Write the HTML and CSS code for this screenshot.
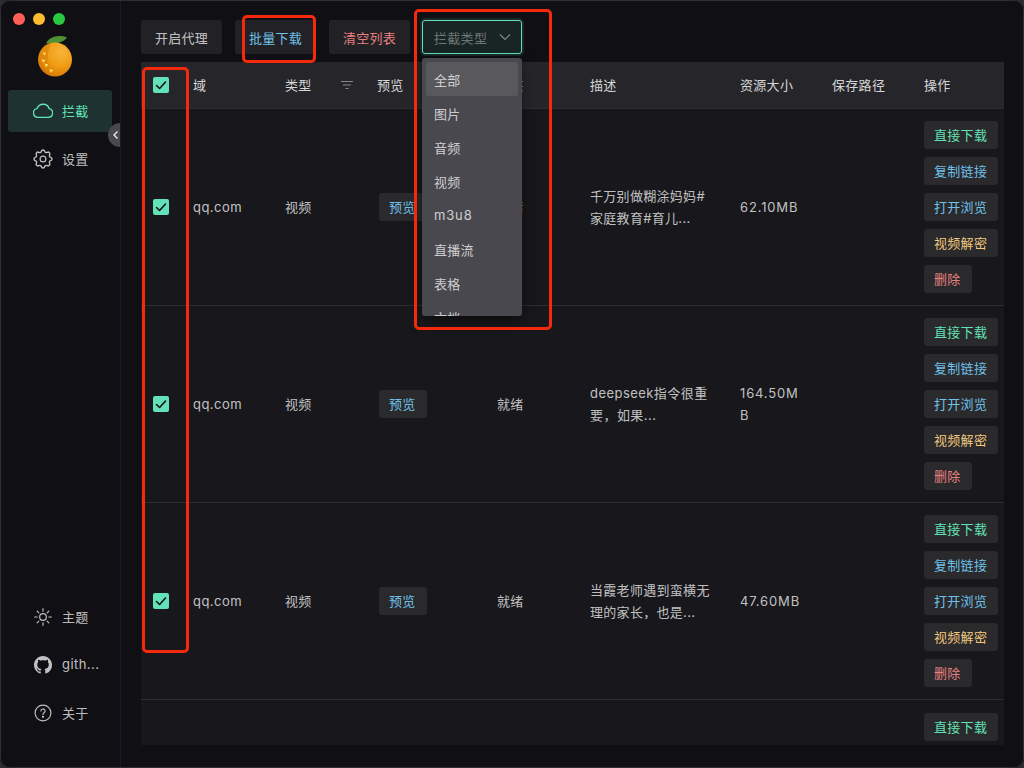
FILE: index.html
```html
<!DOCTYPE html>
<html lang="zh">
<head>
<meta charset="utf-8">
<title>拦截</title>
<link rel="stylesheet" href="styles.css">
</head>
<body>
<div class="window">
  <aside class="sidebar">
    <div class="traffic"><i class="dot red"></i><i class="dot yellow"></i><i class="dot green"></i></div>
    <svg class="logo" viewBox="0 0 36 42" width="36" height="42">
      <defs>
        <radialGradient id="og" cx="0.68" cy="0.28" r="0.85">
          <stop offset="0" stop-color="#f8b53a"/><stop offset="0.5" stop-color="#f09c14"/><stop offset="0.85" stop-color="#d97c08"/><stop offset="1" stop-color="#b85f06"/>
        </radialGradient>
      </defs>
      <path d="M9 8.500 C12 2 21 -1 30 2.500 C26 8 18 9 9 8.500Z" fill="#4f9236"/>
      <circle cx="18" cy="24.500" r="17" fill="url(#og)"/>
      <path d="M7 11.500 C1.500 21 6 35 18 41 C10 32 9 20 13.500 9Z" fill="#dc860c" opacity=".75"/>
      <path d="M5.500 17.500l3.500 .3-1.500 2.700zM4.500 24.500l3.800 .5-2 2.800zM7.500 28.500l3.800 1-2.300 2.700zM12.500 34l4 1.500-3 2z" fill="#fbe45c"/>
    </svg>
    <nav class="nav">
      <a class="nav-item active">
        <svg class="ico" viewBox="0 0 24 24"><path d="M6.500 18.500h11a4.500 4.500 0 0 0 .8-8.900A6.500 6.500 0 0 0 6 9.200a4.700 4.700 0 0 0 .5 9.300Z" transform="translate(-2 -2) scale(1.17)"/></svg>
        <span>拦截</span>
      </a>
      <a class="nav-item">
        <svg class="ico" viewBox="0 0 24 24"><path d="M10.325 4.317c.426-1.756 2.924-1.756 3.35 0a1.724 1.724 0 0 0 2.573 1.066c1.543-.94 3.31.826 2.37 2.37a1.724 1.724 0 0 0 1.065 2.572c1.756.426 1.756 2.924 0 3.35a1.724 1.724 0 0 0-1.066 2.573c.94 1.543-.826 3.31-2.37 2.37a1.724 1.724 0 0 0-2.572 1.065c-.426 1.756-2.924 1.756-3.35 0a1.724 1.724 0 0 0-2.573-1.066c-1.543.94-3.31-.826-2.37-2.37a1.724 1.724 0 0 0-1.065-2.572c-1.756-.426-1.756-2.924 0-3.35a1.724 1.724 0 0 0 1.066-2.573c-.94-1.543.826-3.31 2.37-2.37c1 .608 2.296.07 2.572-1.065z" transform="translate(-2.400 -2.400) scale(1.2)"/><circle cx="12" cy="12" r="3.500"/></svg>
        <span>设置</span>
      </a>
    </nav>
    <nav class="nav nav-bottom">
      <a class="nav-item">
        <svg class="ico" viewBox="0 0 24 24"><circle cx="12" cy="12" r="4"/><path d="M12 2v3M12 19v3M2 12h3M19 12h3M5 5l2 2M17 17l2 2M5 19l2-2M17 7l2-2"/></svg>
        <span>主题</span>
      </a>
      <a class="nav-item">
        <svg class="ico solid" viewBox="0 0 16 16"><path d="M8 0C3.580 0 0 3.580 0 8c0 3.540 2.290 6.530 5.470 7.590.4.070.55-.17.55-.38 0-.19-.01-.82-.01-1.490-2.010.37-2.530-.49-2.690-.94-.09-.23-.48-.94-.82-1.130-.28-.15-.68-.52-.01-.53.63-.01 1.080.58 1.230.82.72 1.210 1.870.87 2.330.66.07-.52.28-.87.51-1.070-1.780-.2-3.640-.89-3.640-3.950 0-.87.31-1.590.82-2.150-.08-.2-.36-1.020.08-2.120 0 0 .67-.21 2.200.82.64-.18 1.320-.27 2-.27s1.360.09 2 .27c1.530-1.040 2.200-.82 2.200-.82.44 1.100.16 1.920.08 2.120.51.56.82 1.270.82 2.150 0 3.070-1.870 3.750-3.650 3.950.29.25.54.73.54 1.480 0 1.070-.01 1.930-.01 2.200 0 .21.15.46.55.38A8.010 8.010 0 0 0 16 8c0-4.420-3.580-8-8-8Z"/></svg>
        <span class="lat">gith...</span>
      </a>
      <a class="nav-item">
        <svg class="ico" viewBox="0 0 24 24"><circle cx="12" cy="12" r="9.500"/><path d="M9.500 9.600a2.500 2.500 0 1 1 3.700 2.200c-.8.5-1.200 1-1.200 2"/><circle class="fill" cx="12" cy="16.600" r=".6"/></svg>
        <span>关于</span>
      </a>
    </nav>
    <span class="collapse"><svg viewBox="0 0 8 10" width="8" height="10"><path d="M5.500 1.500 2 5l3.500 3.500"/></svg></span>
  </aside>

  <main class="main">
    <div class="toolbar">
      <button class="btn">开启代理</button>
      <button class="btn info">批量下载</button>
      <button class="btn error">清空列表</button>
      <div class="select">
        <span>拦截类型</span>
        <svg viewBox="0 0 12 8" width="12" height="8"><path d="M1 1.500 6 6.500 11 1.500"/></svg>
      </div>
    </div>

    <div class="table">
      <div class="row head">
        <div class="cell check"><i class="box"><svg viewBox="0 0 16 16"><path d="M3.500 8.500 6.600 11.500 12.500 5"/></svg></i></div>
        <div class="cell">域</div>
        <div class="cell type-head">类型<svg class="filter" viewBox="0 0 14 10" width="14" height="10"><path d="M1 1.500h12M3 5h8M5.500 8.500h3"/></svg></div>
        <div class="cell">预览</div>
        <div class="cell">状态</div>
        <div class="cell">描述</div>
        <div class="cell">资源大小</div>
        <div class="cell">保存路径</div>
        <div class="cell">操作</div>
      </div>

      <div class="row">
        <div class="cell check"><i class="box"><svg viewBox="0 0 16 16"><path d="M3.500 8.500 6.600 11.500 12.500 5"/></svg></i></div>
        <div class="cell lat">qq.com</div>
        <div class="cell">视频</div>
        <div class="cell preview"><button class="tag info">预览</button></div>
        <div class="cell">就绪</div>
        <div class="cell desc">千万别做糊涂妈妈#家庭教育#育儿...</div>
        <div class="cell size num">62.10MB</div>
        <div class="cell"></div>
        <div class="cell actions">
          <button class="tag success">直接下载</button>
          <button class="tag info">复制链接</button>
          <button class="tag info">打开浏览</button>
          <button class="tag warning">视频解密</button>
          <button class="tag error">删除</button>
        </div>
      </div>

      <div class="row">
        <div class="cell check"><i class="box"><svg viewBox="0 0 16 16"><path d="M3.500 8.500 6.600 11.500 12.500 5"/></svg></i></div>
        <div class="cell lat">qq.com</div>
        <div class="cell">视频</div>
        <div class="cell preview"><button class="tag info">预览</button></div>
        <div class="cell">就绪</div>
        <div class="cell desc lat">deepseek指令很重要，如果...</div>
        <div class="cell size num">164.50MB</div>
        <div class="cell"></div>
        <div class="cell actions">
          <button class="tag success">直接下载</button>
          <button class="tag info">复制链接</button>
          <button class="tag info">打开浏览</button>
          <button class="tag warning">视频解密</button>
          <button class="tag error">删除</button>
        </div>
      </div>

      <div class="row">
        <div class="cell check"><i class="box"><svg viewBox="0 0 16 16"><path d="M3.500 8.500 6.600 11.500 12.500 5"/></svg></i></div>
        <div class="cell lat">qq.com</div>
        <div class="cell">视频</div>
        <div class="cell preview"><button class="tag info">预览</button></div>
        <div class="cell">就绪</div>
        <div class="cell desc">当霞老师遇到蛮横无理的家长，也是...</div>
        <div class="cell size num">47.60MB</div>
        <div class="cell"></div>
        <div class="cell actions">
          <button class="tag success">直接下载</button>
          <button class="tag info">复制链接</button>
          <button class="tag info">打开浏览</button>
          <button class="tag warning">视频解密</button>
          <button class="tag error">删除</button>
        </div>
      </div>

      <div class="row">
        <div class="cell check"></div>
        <div class="cell"></div>
        <div class="cell"></div>
        <div class="cell"></div>
        <div class="cell"></div>
        <div class="cell"></div>
        <div class="cell"></div>
        <div class="cell"></div>
        <div class="cell actions">
          <button class="tag success">直接下载</button>
        </div>
      </div>
    </div>

    <div class="dropdown">
      <div class="option selected">全部</div>
      <div class="option">图片</div>
      <div class="option">音频</div>
      <div class="option">视频</div>
      <div class="option num">m3u8</div>
      <div class="option">直播流</div>
      <div class="option">表格</div>
      <div class="option">文档</div>
    </div>
  </main>

  <i class="mark mark-check"></i>
  <i class="mark mark-batch"></i>
  <i class="mark mark-select"></i>
</div>
</body>
</html>
```
FILE: styles.css
```css
* { box-sizing: border-box; }
html, body { margin: 0; height: 100%; background: #2e2e30; }
body {
  font-family: Inter, "Noto Sans CJK SC", sans-serif;
  font-size: 13px;
  letter-spacing: 0.3px;
  color: rgba(255, 255, 255, 0.74);
  overflow: hidden;
}
button { font: inherit; letter-spacing: inherit; border: 0; cursor: pointer; }
.lat { letter-spacing: 0.45px; }
.num { letter-spacing: 0.85px; }

.window {
  position: relative;
  display: flex;
  width: 1024px;
  height: 768px;
  overflow: hidden;
  background: #101014;
  border-radius: 10px;
}
.window::after {
  content: "";
  position: absolute;
  inset: 0;
  border: 1px solid #303034;
  border-radius: 10px;
  pointer-events: none;
}

/* sidebar */
.sidebar {
  position: relative;
  flex: 0 0 121px;
  padding: 13px 8px 0;
  display: flex;
  flex-direction: column;
  border-right: 1px solid #15192a;
}
.traffic { display: flex; gap: 8px; padding-left: 5px; }
.dot { width: 12px; height: 12px; border-radius: 50%; }
.red { background: #ff5f57; }
.yellow { background: #febc2e; }
.green { background: #28c840; }
.logo { margin: 10px 0 0 29px; flex: none; }
.nav { display: flex; flex-direction: column; gap: 6px; margin-top: 13px; }
.nav-bottom { margin-top: auto; margin-bottom: 34px; }
.nav-item {
  display: flex;
  align-items: center;
  gap: 9px;
  width: 104px;
  height: 42px;
  padding-left: 25px;
  border-radius: 3px;
}
.nav-item span { margin-top: -2px; }
.nav-item.active { background: #1d3231; color: #63e2b7; }
.ico { width: 20px; height: 20px; flex: none; fill: none; stroke: currentColor; stroke-width: 1.4; stroke-linecap: round; stroke-linejoin: round; }
.ico.solid { width: 18px; height: 18px; margin: 0 1px; fill: currentColor; stroke: none; }
.ico .fill { fill: currentColor; }
.collapse {
  position: absolute;
  right: 0;
  top: 123px;
  width: 12px;
  height: 24px;
  display: flex;
  align-items: center;
  justify-content: flex-end;
  overflow: hidden;
  border-radius: 12px 0 0 12px;
  background: #48484e;
}
.collapse svg { flex: none; fill: none; stroke: #e8e8e8; stroke-width: 1.4; }

/* main */
.main { position: relative; flex: 1; padding: 20px 20px 0; }
.toolbar { display: flex; align-items: center; gap: 13px; height: 34px; margin-bottom: 8px; }
.btn {
  width: 81px;
  height: 34px;
  padding: 0;
  border-radius: 3px;
  background: rgba(255, 255, 255, 0.08);
  color: rgba(255, 255, 255, 0.74);
}
.btn.info, .tag.info { color: #70c0e8; }
.btn.error, .tag.error { color: #e88080; }
.tag.success { color: #63e2b7; }
.tag.warning { color: #f2c97d; }
.select {
  display: flex;
  align-items: center;
  justify-content: space-between;
  width: 100px;
  height: 34px;
  margin-left: -1px;
  padding: 0 10px 0 11px;
  border: 1px solid #63e2b7;
  border-radius: 3px;
  background: rgba(99, 226, 183, 0.1);
  box-shadow: 0 0 0 2px rgba(99, 226, 183, 0.12);
  color: rgba(255, 255, 255, 0.38);
}
.select svg { fill: none; stroke: rgba(255, 255, 255, 0.45); stroke-width: 1.1; }

/* table */
.table { height: 683px; overflow: hidden; background: #18181c; }
.row {
  display: grid;
  grid-template-columns: 44px 92px 92px 120px 93px 150px 92px 92px 88px;
  height: 197px;
  border-bottom: 1px solid #2d2d30;
}
.row.head { height: 47px; background: #26262a; color: rgba(255, 255, 255, 0.82); }
.cell {
  display: flex;
  align-items: center;
  padding: 0 8px;
  line-height: 22px;
  word-break: break-all;
}
.check { padding: 0 0 0 12px; }
.type-head { justify-content: space-between; padding-right: 15px; }
.preview { padding-left: 10px; }
.desc { padding-right: 20px; }
.size { padding-right: 22px; }
.filter { fill: none; stroke: rgba(255, 255, 255, 0.45); stroke-width: 1; }
.box {
  display: block;
  width: 16px;
  height: 16px;
  border-radius: 2px;
  background: #63e2b7;
}
.box svg { display: block; fill: none; stroke: #101014; stroke-width: 1.6; stroke-linecap: round; stroke-linejoin: round; }
.actions {
  flex-direction: column;
  align-items: flex-start;
  justify-content: center;
  gap: 8px;
  padding-right: 0;
}
.tag {
  height: 28px;
  padding: 0 11px 0 10px;
  border-radius: 3px;
  background: rgba(255, 255, 255, 0.08);
  white-space: nowrap;
}
.row:last-child .actions { justify-content: flex-start; padding-top: 13px; }

/* select menu */
.dropdown {
  position: absolute;
  left: 301px;
  top: 58px;
  width: 100px;
  height: 258px;
  padding: 4px;
  overflow: hidden;
  border-radius: 3px;
  background: #48484e;
  box-shadow: 0 3px 6px -4px rgba(0, 0, 0, 0.5), 0 6px 16px rgba(0, 0, 0, 0.35);
}
.option {
  display: flex;
  align-items: center;
  height: 34px;
  padding: 0 8px;
  border-radius: 3px;
}
.option.selected { background: rgba(255, 255, 255, 0.09); }

/* red annotation frames */
.mark {
  position: absolute;
  border: 3px solid #f5290c;
  border-radius: 5px;
  pointer-events: none;
}
.mark-check { left: 142px; top: 67px; width: 47px; height: 586px; }
.mark-batch { left: 242px; top: 15px; width: 74px; height: 48px; }
.mark-select { left: 414px; top: 9px; width: 138px; height: 321px; }
```
